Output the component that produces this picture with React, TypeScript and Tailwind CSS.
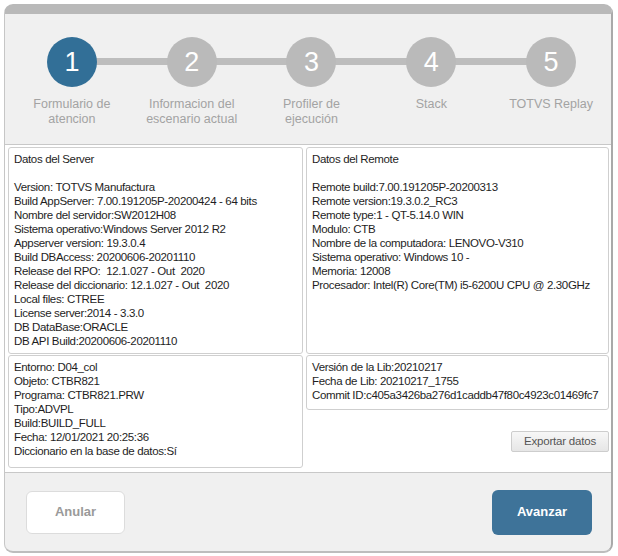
import React from 'react';

const steps = [
	{ n: 1, label: ['Formulario de', 'atencion'] },
	{ n: 2, label: ['Informacion del', 'escenario actual'] },
	{ n: 3, label: ['Profiler de', 'ejecución'] },
	{ n: 4, label: ['Stack'] },
	{ n: 5, label: ['TOTVS Replay'] },
];

const serverLines = [
	'Version: TOTVS Manufactura',
	'Build AppServer: 7.00.191205P-20200424 - 64 bits',
	'Nombre del servidor:SW2012H08',
	'Sistema operativo:Windows Server 2012 R2',
	'Appserver version: 19.3.0.4',
	'Build DBAccess: 20200606-20201110',
	'Release del RPO:  12.1.027 - Out  2020',
	'Release del diccionario: 12.1.027 - Out  2020',
	'Local files: CTREE',
	'License server:2014 - 3.3.0',
	'DB DataBase:ORACLE',
	'DB API Build:20200606-20201110',
];

const remoteLines = [
	'Remote build:7.00.191205P-20200313',
	'Remote version:19.3.0.2_RC3',
	'Remote type:1 - QT-5.14.0 WIN',
	'Modulo: CTB',
	'Nombre de la computadora: LENOVO-V310',
	'Sistema operativo: Windows 10 -',
	'Memoria: 12008',
	'Procesador: Intel(R) Core(TM) i5-6200U CPU @ 2.30GHz',
];

const envLines = [
	'Entorno: D04_col',
	'Objeto: CTBR821',
	'Programa: CTBR821.PRW',
	'Tipo:ADVPL',
	'Build:BUILD_FULL',
	'Fecha: 12/01/2021 20:25:36',
	'Diccionario en la base de datos:Sí',
];

const libLines = [
	'Versión de la Lib:20210217',
	'Fecha de Lib: 20210217_1755',
	'Commit ID:c405a3426ba276d1caddb47f80c4923c01469fc7',
];

const Panel = ({ lines, className = '' }: { lines: string[]; className?: string }) => (
	<div
		className={`bg-white border border-[#cfcfcf] rounded-[3px] px-[5px] pt-[4px] text-[11.5px] leading-[14px] tracking-[-0.35px] text-[#1e1e1e] ${className}`}
	>
		{lines.map((l, i) => (
			<div key={i} className="whitespace-pre h-[14px]">
				{l}
			</div>
		))}
	</div>
);

export default function App() {
	return (
		<div className="w-[618px] h-[556px] bg-white pt-[4px] pl-[4px] font-['Liberation_Sans',Arial,sans-serif]">
			<div className="w-[609px] h-[549px] bg-[#f0f0f0] rounded-[9px] border-t-[10px] border-t-[#b9b9b9] border-l border-l-[#c6c6c6] border-r-[2px] border-r-[#a9a9a9] border-b-[2px] border-b-[#bdbdbd] flex flex-col overflow-hidden">
				{/* wizard steps */}
				<div className="relative flex pl-[7px] pt-[23px] h-[130px]">
					<div className="absolute left-[67px] w-[480px] top-[44px] h-[7px] bg-[#bdbdbd]" />
					{steps.map(({ n, label }) => (
						<div key={n} className="relative w-[120px] flex flex-col items-center">
							<div
								className={`${
									n === 1 ? 'bg-[#326f97]' : 'bg-[#bababa]'
								} w-[50px] h-[50px] rounded-full flex items-center justify-center text-white text-[27px]`}
							>
								{n}
							</div>
							<div className="mt-[10px] text-[12.5px] leading-[15px] text-[#a3a3a3] text-center">
								{label.map((l) => (
									<div key={l}>{l}</div>
								))}
							</div>
						</div>
					))}
				</div>

				{/* data panels */}
				<div className="bg-white border-y border-[#c8c8c8] h-[329px] pl-[3px] pt-[2px] grid grid-cols-[295px_303px] gap-x-[3px]">
					<div className="flex flex-col gap-[1px]">
						<Panel lines={['Datos del Server', '', ...serverLines]} className="h-[207px]" />
						<Panel lines={envLines} className="h-[113px]" />
					</div>
					<div className="flex flex-col gap-[1px]">
						<Panel lines={['Datos del Remote', '', ...remoteLines]} className="h-[207px]" />
						<Panel lines={libLines} className="h-[55px]" />
						<div className="flex justify-end mt-[20px]">
							<button className="w-[98px] h-[21px] border border-[#cdcdcd] rounded-[2px] bg-gradient-to-b from-[#f7f7f7] to-[#e6e6e6] text-[11.5px] tracking-[-0.2px] text-[#555]">
								Exportar datos
							</button>
						</div>
					</div>
				</div>

				{/* footer */}
				<div className="flex-1 flex items-center justify-between pl-[21px] pr-[19px]">
					<button className="w-[99px] h-[43px] bg-white border border-[#dcdcdc] rounded-[6px] text-[13px] font-bold text-[#9a9a9a]">
						Anular
					</button>
					<button className="w-[100px] h-[45px] bg-[#3e7399] rounded-[6px] text-[13px] font-bold text-white">
						Avanzar
					</button>
				</div>
			</div>
		</div>
	);
}
